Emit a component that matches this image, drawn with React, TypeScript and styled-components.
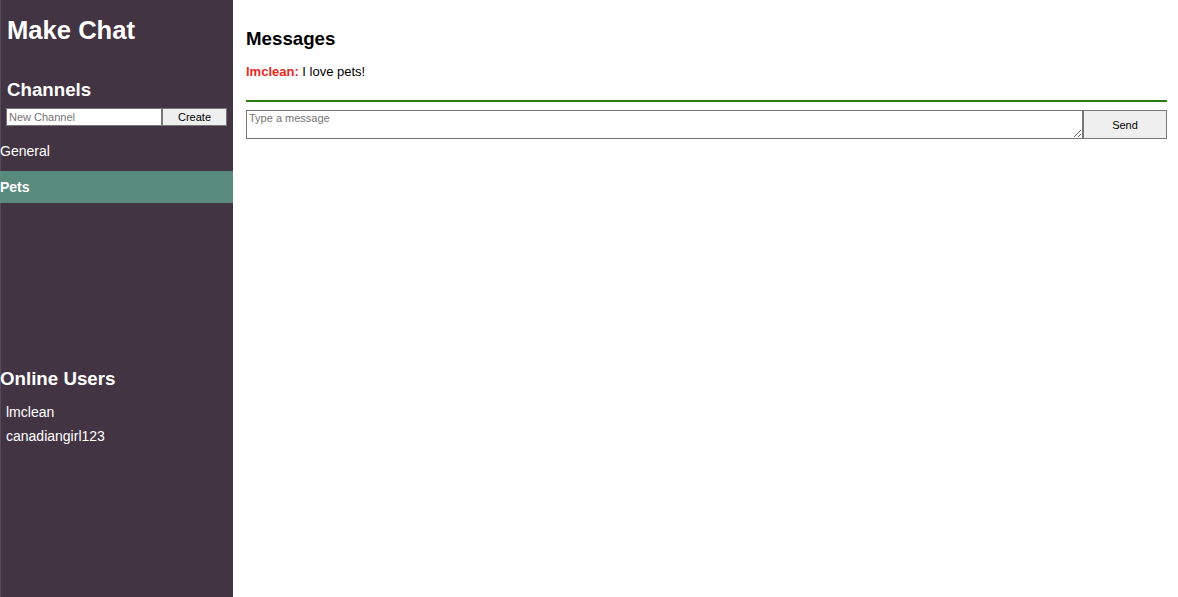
import React from "react";
import styled, { createGlobalStyle } from "styled-components";

const Global = createGlobalStyle`
  html, body { margin: 0; padding: 0; background: #fff; }
  body { font-family: "Liberation Sans", Arial, Helvetica, sans-serif; }
  * { box-sizing: border-box; }
`;

const Layout = styled.div`
  display: flex;
  height: 597px;
  width: 1178px;
`;

const Sidebar = styled.aside`
  width: 233px;
  flex: none;
  background: #433443;
  border-left: 1px solid #55495a;
  color: #fff;
  display: flex;
  flex-direction: column;
`;

const Title = styled.h1`
  margin: 16px 0 0 6px;
  font-size: 25.6px;
  line-height: 29.4px;
  font-weight: bold;
`;

const SectionTitle = styled.h3<{ $indent?: number; $top: number }>`
  margin: ${(p) => p.$top}px 0 0 ${(p) => p.$indent ?? 0}px;
  font-size: 18.72px;
  line-height: 21.5px;
  font-weight: bold;
`;

const CreateRow = styled.form`
  display: flex;
  margin: 7px 0 0 5px;
  height: 18px;
`;

const ChannelInput = styled.input`
  width: 156px;
  height: 18px;
  border: 1px solid #767676;
  padding: 0 2px;
  font-family: "Liberation Sans", Arial, sans-serif;
  font-size: 11px;
  color: #000;
  background: #fff;
  &::placeholder { color: #757575; }
`;

const SmallButton = styled.button`
  width: 65px;
  height: 18px;
  border: 1px solid #767676;
  background: #efefef;
  font-family: "Liberation Sans", Arial, sans-serif;
  font-size: 11px;
  color: #000;
  padding: 0;
`;

const ChannelList = styled.ul`
  list-style: none;
  margin: 9px 0 0;
  padding: 0;
  height: 233px;
  display: flex;
  flex-direction: column;
  gap: 4px;
`;

const ChannelItem = styled.li<{ $active?: boolean }>`
  height: 32px;
  display: flex;
  align-items: center;
  font-size: 14px;
  line-height: 16px;
  margin-left: -1px;
  font-weight: ${(p) => (p.$active ? "bold" : "normal")};
  background: ${(p) => (p.$active ? "#588a7e" : "transparent")};
`;

const UserList = styled.ul`
  list-style: none;
  margin: 11px 0 0 5px;
  padding: 0;
`;

const UserItem = styled.li`
  font-size: 14px;
  line-height: 24px;
`;

const Main = styled.main`
  flex: 1;
  padding: 0 11px 0 13px;
  display: flex;
  flex-direction: column;
`;

const MainTitle = styled.h3`
  margin: 28px 0 0;
  font-size: 18.72px;
  line-height: 22px;
  font-weight: bold;
  color: #000;
`;

const Messages = styled.div`
  margin-top: 14px;
  padding-bottom: 21px;
  border-bottom: 2px solid #2f7a10;
`;

const Message = styled.p`
  margin: 0;
  font-size: 13px;
  line-height: 15px;
  color: #000;
`;

const Author = styled.span`
  color: #e8271c;
  font-weight: bold;
`;

const Composer = styled.form`
  display: flex;
  margin-top: 8px;
  height: 29px;
`;

const MessageBox = styled.textarea`
  flex: 1;
  height: 29px;
  border: 1px solid #767676;
  padding: 1px 2px;
  font-family: "Liberation Sans", Arial, sans-serif;
  font-size: 11px;
  resize: both;
  &::placeholder { color: #757575; }
`;

const SendButton = styled.button`
  width: 84px;
  height: 29px;
  border: 1px solid #767676;
  background: #efefef;
  font-family: "Liberation Sans", Arial, sans-serif;
  font-size: 11px;
  color: #000;
  padding: 0;
`;

export default function App() {
  return (
    <>
      <Global />
      <Layout>
        <Sidebar>
          <Title>Make Chat</Title>
          <SectionTitle $indent={6} $top={34}>Channels</SectionTitle>
          <CreateRow onSubmit={(e) => e.preventDefault()}>
            <ChannelInput placeholder="New Channel" />
            <SmallButton type="submit">Create</SmallButton>
          </CreateRow>
          <ChannelList>
            <ChannelItem>General</ChannelItem>
            <ChannelItem $active>Pets</ChannelItem>
          </ChannelList>
          <SectionTitle $indent={-1} $top={0}>Online Users</SectionTitle>
          <UserList>
            <UserItem>lmclean</UserItem>
            <UserItem>canadiangirl123</UserItem>
          </UserList>
        </Sidebar>
        <Main>
          <MainTitle>Messages</MainTitle>
          <Messages>
            <Message>
              <Author>lmclean:</Author> I love pets!
            </Message>
          </Messages>
          <Composer onSubmit={(e) => e.preventDefault()}>
            <MessageBox placeholder="Type a message" />
            <SendButton type="submit">Send</SendButton>
          </Composer>
        </Main>
      </Layout>
    </>
  );
}
